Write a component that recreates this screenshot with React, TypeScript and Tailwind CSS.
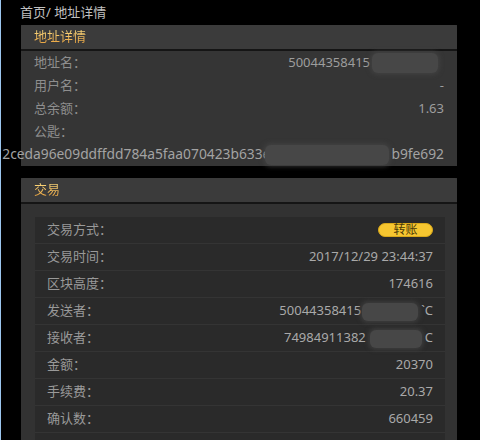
import React from 'react'

const font = { fontFamily: '"Noto Sans", "Noto Sans CJK SC", sans-serif' }

// grey smudge standing in for the redacted part of a value
function Mask({ w, h = 20 }: { w: number; h?: number }) {
  return (
    <span
      className="inline-block rounded-md bg-[#474747] align-middle shadow-[0_0_4px_2px_rgba(71,71,71,0.6)]"
      style={{ width: w, height: h }}
    />
  )
}

function PanelHeader({ title }: { title: string }) {
  return (
    <div className="h-[26px] flex items-center px-[13px] bg-[#3b3b3b] border-b-2 border-[#151515] rounded-t-[2px]">
      <span className="text-[13px] bg-gradient-to-b from-[#ffe68a] to-[#e4962c] bg-clip-text text-transparent">
        {title}
      </span>
    </div>
  )
}

function InfoRow({ label, children }: { label: string; children?: React.ReactNode }) {
  return (
    <div className="h-[23px] flex items-center justify-between px-[13px] text-[13px]">
      <span className="text-[#8e8e8e]">{label}</span>
      <span className="text-[#9d9d9d] flex items-center">{children}</span>
    </div>
  )
}

function TxRow({ label, children }: { label: string; children?: React.ReactNode }) {
  return (
    <div className="h-[27px] flex items-center justify-between px-[12px] bg-[#2a2a2a] border-b border-[#343434] text-[13px]">
      <span className="text-[#999999]">{label}</span>
      <span className="text-[#a9a9a9] flex items-center">{children}</span>
    </div>
  )
}

export default function App() {
  return (
    <div className="w-[480px] h-[440px] overflow-hidden bg-black border-l border-[#9cc6ee]" style={font}>
      <div className="h-[25px] flex items-center pl-[19px] text-[13px] text-[#c0c0c0]">首页/ 地址详情</div>

      <div className="ml-[20px] w-[436px] bg-[#353535]">
        <PanelHeader title="地址详情" />
        <InfoRow label="地址名：">
          50044358415
          <span className="ml-[2px] mr-[6px]"><Mask w={66} /></span>
        </InfoRow>
        <InfoRow label="用户名：">-</InfoRow>
        <InfoRow label="总余额：">1.63</InfoRow>
        <InfoRow label="公匙：" />
        <div className="h-[23px] flex items-center justify-end pr-[13px] text-[13.8px] text-[#a3a3a3] whitespace-nowrap">
          2ceda96e09ddffdd784a5faa070423b633e
          <span className="-ml-[5px] mr-[2px]"><Mask w={124} /></span>
          b9fe692
        </div>
      </div>

      <div className="ml-[20px] mt-[12px] w-[436px] bg-[#323232] pb-[10px]">
        <PanelHeader title="交易" />
        <div className="pt-[13px] pl-[14px] pr-[12px]">
          <TxRow label="交易方式：">
            <span className="h-[14px] w-[55px] rounded-full bg-[#f6c630] border border-[#d9a81a] text-[#4a3806] text-[12px] leading-[14px] flex items-center justify-center">
              转账
            </span>
          </TxRow>
          <TxRow label="交易时间：">2017/12/29 23:44:37</TxRow>
          <TxRow label="区块高度：">174616</TxRow>
          <TxRow label="发送者：">
            50044358415
            <span className="ml-[1px]"><Mask w={56} h={18} /></span>
            <span className="ml-[3px]">`C</span>
          </TxRow>
          <TxRow label="接收者：">
            74984911382
            <span className="ml-[4px]"><Mask w={52} h={18} /></span>
            <span className="ml-[3px]">C</span>
          </TxRow>
          <TxRow label="金额：">20370</TxRow>
          <TxRow label="手续费：">20.37</TxRow>
          <TxRow label="确认数：">660459</TxRow>
          <div className="h-[27px] bg-[#2a2a2a]" />
        </div>
      </div>
    </div>
  )
}
